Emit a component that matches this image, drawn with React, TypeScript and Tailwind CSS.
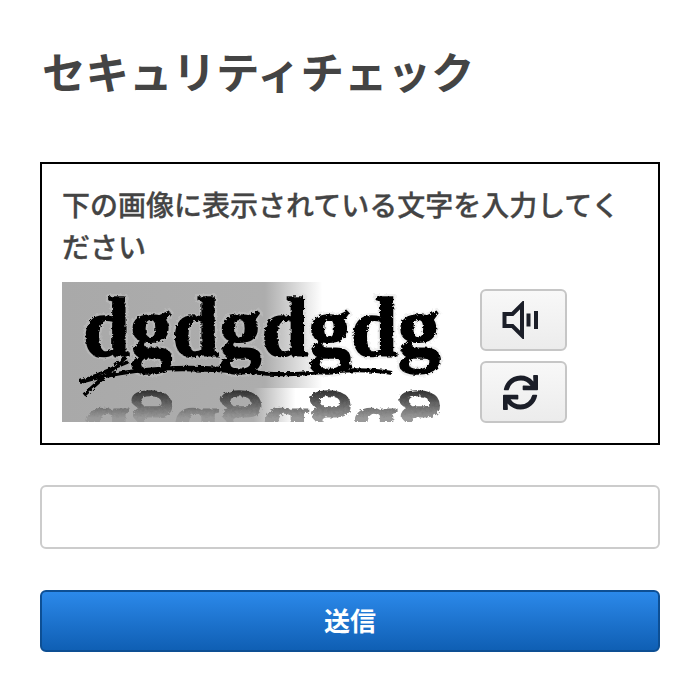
import { FaSync } from 'react-icons/fa';

const jpFont = "font-['Inter','Noto_Sans_CJK_JP',sans-serif]";

function SpeakerIcon() {
  return (
    <svg width="38" height="38" viewBox="0 0 38 38" className="text-[#1b1e28]">
      <path d="M2.500 13h8L20 3.500v31L10.500 25h-8z" fill="none" stroke="currentColor" strokeWidth="4" strokeLinejoin="miter" />
      <rect x="24.500" y="12.500" width="4" height="13" fill="currentColor" />
      <rect x="32" y="10" width="4" height="18" fill="currentColor" />
    </svg>
  );
}

function CaptchaImage() {
  return (
    <svg width="390" height="140" viewBox="0 0 390 140" className="shrink-0">
      <defs>
        <linearGradient id="bg" x1="0" x2="1" y1="0" y2="0">
          <stop offset="0" stopColor="#a9a9a9" />
          <stop offset="0.53" stopColor="#adadad" />
          <stop offset="0.68" stopColor="#ffffff" />
          <stop offset="1" stopColor="#ffffff" />
        </linearGradient>
        <linearGradient id="bg-low" x1="0" x2="1" y1="0" y2="0">
          <stop offset="0" stopColor="#a9a9a9" />
          <stop offset="0.5" stopColor="#adadad" />
          <stop offset="0.61" stopColor="#ffffff" />
          <stop offset="1" stopColor="#ffffff" />
        </linearGradient>
        <linearGradient id="fade" gradientUnits="userSpaceOnUse" x1="0" x2="0" y1="-136" y2="-100">
          <stop offset="0" stopColor="#999999" />
          <stop offset="1" stopColor="#111111" />
        </linearGradient>
        <filter id="rough">
          <feTurbulence type="fractalNoise" baseFrequency="0.35" numOctaves="2" seed="4" />
          <feDisplacementMap in="SourceGraphic" scale="4" />
        </filter>
        <clipPath id="mirror">
          <rect x="0" y="104" width="383" height="36" />
        </clipPath>
      </defs>
      <rect width="383" height="106" fill="url(#bg)" />
      <rect y="106" width="383" height="34" fill="url(#bg-low)" />
      <g filter="url(#rough)" fontFamily="'Liberation Serif', serif" fontWeight="700" fontSize="84">
        <text
          x="21"
          y="74"
          textLength="357"
          lengthAdjust="spacingAndGlyphs"
          fill="none"
          stroke="#d0d0d0"
          strokeWidth="6"
          opacity="0.3"
        >
          dgdgdgdg
        </text>
        <text x="21" y="74" textLength="357" lengthAdjust="spacingAndGlyphs" fill="#050505" stroke="#050505" strokeWidth="1.500">
          dgdgdgdg
        </text>
        <g clipPath="url(#mirror)">
          <text
            x="21"
            y="-127"
            transform="scale(1 -1)"
            textLength="357"
            lengthAdjust="spacingAndGlyphs"
            fill="url(#fade)"
            stroke="url(#fade)"
            strokeWidth="1.500"
          >
            dgdgdgdg
          </text>
        </g>
        <path d="M18 100 C70 86 130 82 190 90 C240 98 280 82 330 91" fill="none" stroke="#050505" strokeWidth="4" />
        <path d="M22 113 L64 75" fill="none" stroke="#050505" strokeWidth="4" />
        <path d="M18 100 L66 80" fill="none" stroke="#050505" strokeWidth="3" />
        <path d="M110 88 C170 86 230 100 290 84" fill="none" stroke="#050505" strokeWidth="3" />
      </g>
    </svg>
  );
}

function IconButton({ children, label }: { children: React.ReactNode; label: string }) {
  return (
    <button
      aria-label={label}
      className="flex h-[62px] w-[87px] items-center justify-center rounded-md border-2 border-[#c6c6c6] bg-gradient-to-b from-[#f8f8f8] to-[#ececec] pr-[6px]"
    >
      {children}
    </button>
  );
}

export default function App() {
  return (
    <div className={`min-h-[692px] bg-white px-10 pt-[46px] text-[#444444] ${jpFont}`}>
      <h1 className="pl-[2px] text-[43.500px] leading-[54px] font-bold">セキュリティチェック</h1>

      <div className="mt-[62px] h-[283px] border-2 border-black px-5 pt-[21px]">
        <p className="text-[28px] leading-[42px] font-medium [-webkit-text-stroke:0.3px_#444444]">
          下の画像に表示されている文字を入力してください
        </p>
        <div className="mt-[13px] flex">
          <CaptchaImage />
          <div className="mt-[7px] ml-7 flex flex-col gap-[10px]">
            <IconButton label="音声">
              <SpeakerIcon />
            </IconButton>
            <IconButton label="更新">
              <FaSync className="text-[35px] text-[#1b1e28]" />
            </IconButton>
          </div>
        </div>
      </div>

      <input
        type="text"
        className="mt-10 block h-16 w-full rounded-md border-2 border-[#cccccc] bg-white px-4 text-[26px] outline-none"
      />

      <button className="mt-[41px] block h-[62px] w-full rounded-md border-2 border-[#0d4f94] bg-gradient-to-b from-[#2b89ea] to-[#0f5fb4] text-[26px] font-bold text-white">
        送信
      </button>
    </div>
  );
}
